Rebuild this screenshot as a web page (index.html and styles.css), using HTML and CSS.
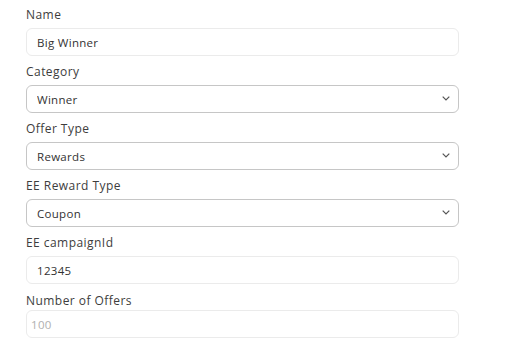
FILE: index.html
```html
<!DOCTYPE html>
<html>
<head>
    <title>Offer</title>
    <meta name="viewport" content="width=device-width, initial-scale=1.0">
    <link rel="stylesheet" href="styles.css">
</head>
<body>
    <form class="offer-form">
        <div class="field">
            <label for="name">Name</label>
            <input type="text" id="name" value="Big Winner">
        </div>
        <div class="field">
            <label for="category">Category</label>
            <div class="select">
                <select id="category"><option>Winner</option></select>
                <svg class="chevron" viewBox="0 0 8 5" width="8" height="5"><path d="M0.7 0.7l3.3 3.3 3.3-3.3" fill="none" stroke="#555" stroke-width="1.2"/></svg>
            </div>
        </div>
        <div class="field">
            <label for="offer-type">Offer Type</label>
            <div class="select">
                <select id="offer-type"><option>Rewards</option></select>
                <svg class="chevron" viewBox="0 0 8 5" width="8" height="5"><path d="M0.7 0.7l3.3 3.3 3.3-3.3" fill="none" stroke="#555" stroke-width="1.2"/></svg>
            </div>
        </div>
        <div class="field">
            <label for="reward-type">EE Reward Type</label>
            <div class="select">
                <select id="reward-type"><option>Coupon</option></select>
                <svg class="chevron" viewBox="0 0 8 5" width="8" height="5"><path d="M0.7 0.7l3.3 3.3 3.3-3.3" fill="none" stroke="#555" stroke-width="1.2"/></svg>
            </div>
        </div>
        <div class="field">
            <label for="campaign">EE campaignId</label>
            <input type="text" id="campaign" value="12345">
        </div>
        <div class="field field-number">
            <label for="offers">Number of Offers</label>
            <input type="number" id="offers" placeholder="100">
        </div>
    </form>
</body>
</html>
```
FILE: styles.css
```css
body {
    font-family: "Open Sans", Arial, sans-serif;
    margin: 0;
    padding: 0;
    background: white;
}
.offer-form {
    width: 433px;
    padding: 7px 0 0 26px;
    display: flex;
    flex-direction: column;
    gap: 8px;
}
.field label {
    display: block;
    font-size: 12px;
    line-height: 16px;
    letter-spacing: 0.45px;
    color: #3d3d3d;
    margin-bottom: 5px;
}
.field input, .field select {
    width: 100%;
    height: 28px;
    box-sizing: border-box;
    padding: 0 10px;
    font-family: inherit;
    font-size: 11.5px;
    letter-spacing: 0.3px;
    color: #333;
    background: white;
    border: 1px solid #ebebeb;
    border-radius: 6px;
    outline: none;
}
.field input::placeholder {
    color: #b0b0b0;
}
.select {
    position: relative;
}
.field select {
    border-color: #c6c6c6;
    appearance: none;
}
.chevron {
    position: absolute;
    right: 9px;
    top: 11px;
}
.field-number {
    margin-top: 1px;
}
.field-number label {
    margin-bottom: 1px;
}
.field-number input {
    padding: 0 4px;
    appearance: textfield;
}
```
